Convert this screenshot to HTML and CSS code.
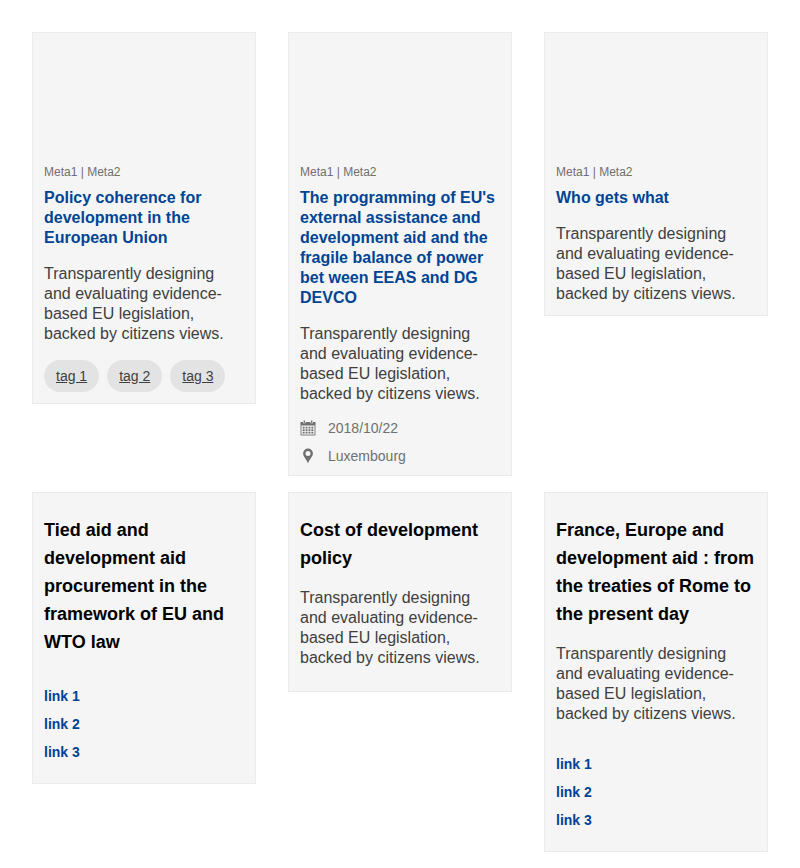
FILE: index.html
```html
<!DOCTYPE html>
<html lang="en">
<head>
<meta charset="utf-8">
<title>Cards</title>
<link rel="stylesheet" href="styles.css">
</head>
<body>
<main class="grid">
  <article class="card">
    <div class="image"></div>
    <div class="meta">Meta1 | Meta2</div>
    <h2 class="title">Policy coherence for development in the European Union</h2>
    <p class="text">Transparently designing and evaluating evidence-based EU legislation, backed by citizens views.</p>
    <div class="tags"><a class="tag">tag 1</a><a class="tag">tag 2</a><a class="tag">tag 3</a></div>
  </article>
  <article class="card">
    <div class="image"></div>
    <div class="meta">Meta1 | Meta2</div>
    <h2 class="title">The programming of EU's external assistance and development aid and the fragile balance of power bet ween EEAS and DG DEVCO</h2>
    <p class="text">Transparently designing and evaluating evidence-based EU legislation, backed by citizens views.</p>
    <ul class="infos">
      <li class="info">
        <svg class="icon" viewBox="0 0 16 16"><path d="M.5 2h2.500v1.200h2.500V2h5v1.200h2.500V2h2.500v3.600H.5z"/><path d="M3.600.6h1.400v2.200H3.600zM11 .6h1.400v2.200H11z"/><path d="M.5 5.500h1v9h13v-9h1v9.900H.5z" opacity=".85"/><path d="M2.700 6.800h1.900v1.800H2.700zm2.900 0h1.900v1.800H5.600zm2.900 0h1.900v1.800H8.500zm2.900 0h1.900v1.800h-1.900zM2.700 9.300h1.900v1.800H2.700zm2.900 0h1.900v1.800H5.600zm2.900 0h1.900v1.800H8.500zm2.900 0h1.900v1.800h-1.900zM2.700 11.800h1.900v1.800H2.700zm2.900 0h1.900v1.800H5.600zm2.900 0h1.900v1.800H8.500zm2.900 0h1.900v1.800h-1.900z"/></svg>
        <span>2018/10/22</span>
      </li>
      <li class="info">
        <svg class="icon" viewBox="0 0 16 16"><path fill-rule="evenodd" d="M8 .6a4.900 4.900 0 0 0-4.900 4.900C3.100 8.600 6.500 11 8 15.400 9.500 11 12.900 8.600 12.900 5.500A4.900 4.900 0 0 0 8 .6zm0 2.400a2.500 2.500 0 1 1 0 5 2.500 2.500 0 0 1 0-5z"/></svg>
        <span>Luxembourg</span>
      </li>
    </ul>
  </article>
  <article class="card">
    <div class="image"></div>
    <div class="meta">Meta1 | Meta2</div>
    <h2 class="title">Who gets what</h2>
    <p class="text">Transparently designing and evaluating evidence-based EU legislation, backed by citizens views.</p>
  </article>
  <article class="card tile">
    <h2 class="heading">Tied aid and development aid procurement in the framework of EU and WTO law</h2>
    <ul class="links"><li>link 1</li><li>link 2</li><li>link 3</li></ul>
  </article>
  <article class="card tile">
    <h2 class="heading">Cost of development policy</h2>
    <p class="text">Transparently designing and evaluating evidence-based EU legislation, backed by citizens views.</p>
  </article>
  <article class="card tile">
    <h2 class="heading">France, Europe and development aid : from the treaties of Rome to the present day</h2>
    <p class="text">Transparently designing and evaluating evidence-based EU legislation, backed by citizens views.</p>
    <ul class="links"><li>link 1</li><li>link 2</li><li>link 3</li></ul>
  </article>
</main>
</body>
</html>
```
FILE: styles.css
```css
* { box-sizing: border-box; }
body {
  margin: 0;
  background: #fff;
  font-family: "Liberation Sans", Arial, sans-serif;
  color: #404040;
}
.grid {
  display: grid;
  grid-template-columns: repeat(3, 224px);
  column-gap: 32px;
  row-gap: 16px;
  align-items: start;
  padding: 32px 32px 16px;
}
.card {
  background: #f5f5f5;
  border: 1px solid #ebebeb;
  padding: 0 11px 11px;
}
.image { height: 131px; }
.meta { font-size: 12px; line-height: 16px; color: #707070; }
.title {
  margin: 8px 0 0;
  font-size: 16px;
  line-height: 20px;
  color: #004494;
}
.text { margin: 16px 0 0; font-size: 16px; line-height: 20px; }
.tags { display: flex; gap: 8px; margin-top: 16px; }
.tag {
  padding: 0 12px;
  border-radius: 16px;
  background: #e3e3e3;
  font-size: 14px;
  line-height: 32px;
  text-decoration: underline;
}
ul { list-style: none; margin: 0; padding: 0; }
.infos { margin-top: 16px; }
.info {
  display: flex;
  align-items: center;
  gap: 12px;
  height: 16px;
  font-size: 14px;
  color: #707070;
}
.info + .info { margin-top: 12px; }
.icon { width: 16px; height: 16px; fill: #707070; }
.tile { padding: 23px 11px; }
.heading { margin: 0; font-size: 18px; line-height: 28px; color: #000; }
.links {
  display: grid;
  gap: 12px;
  margin-top: 32px;
  font-size: 14px;
  font-weight: 700;
  line-height: 16px;
  color: #004494;
}
```
